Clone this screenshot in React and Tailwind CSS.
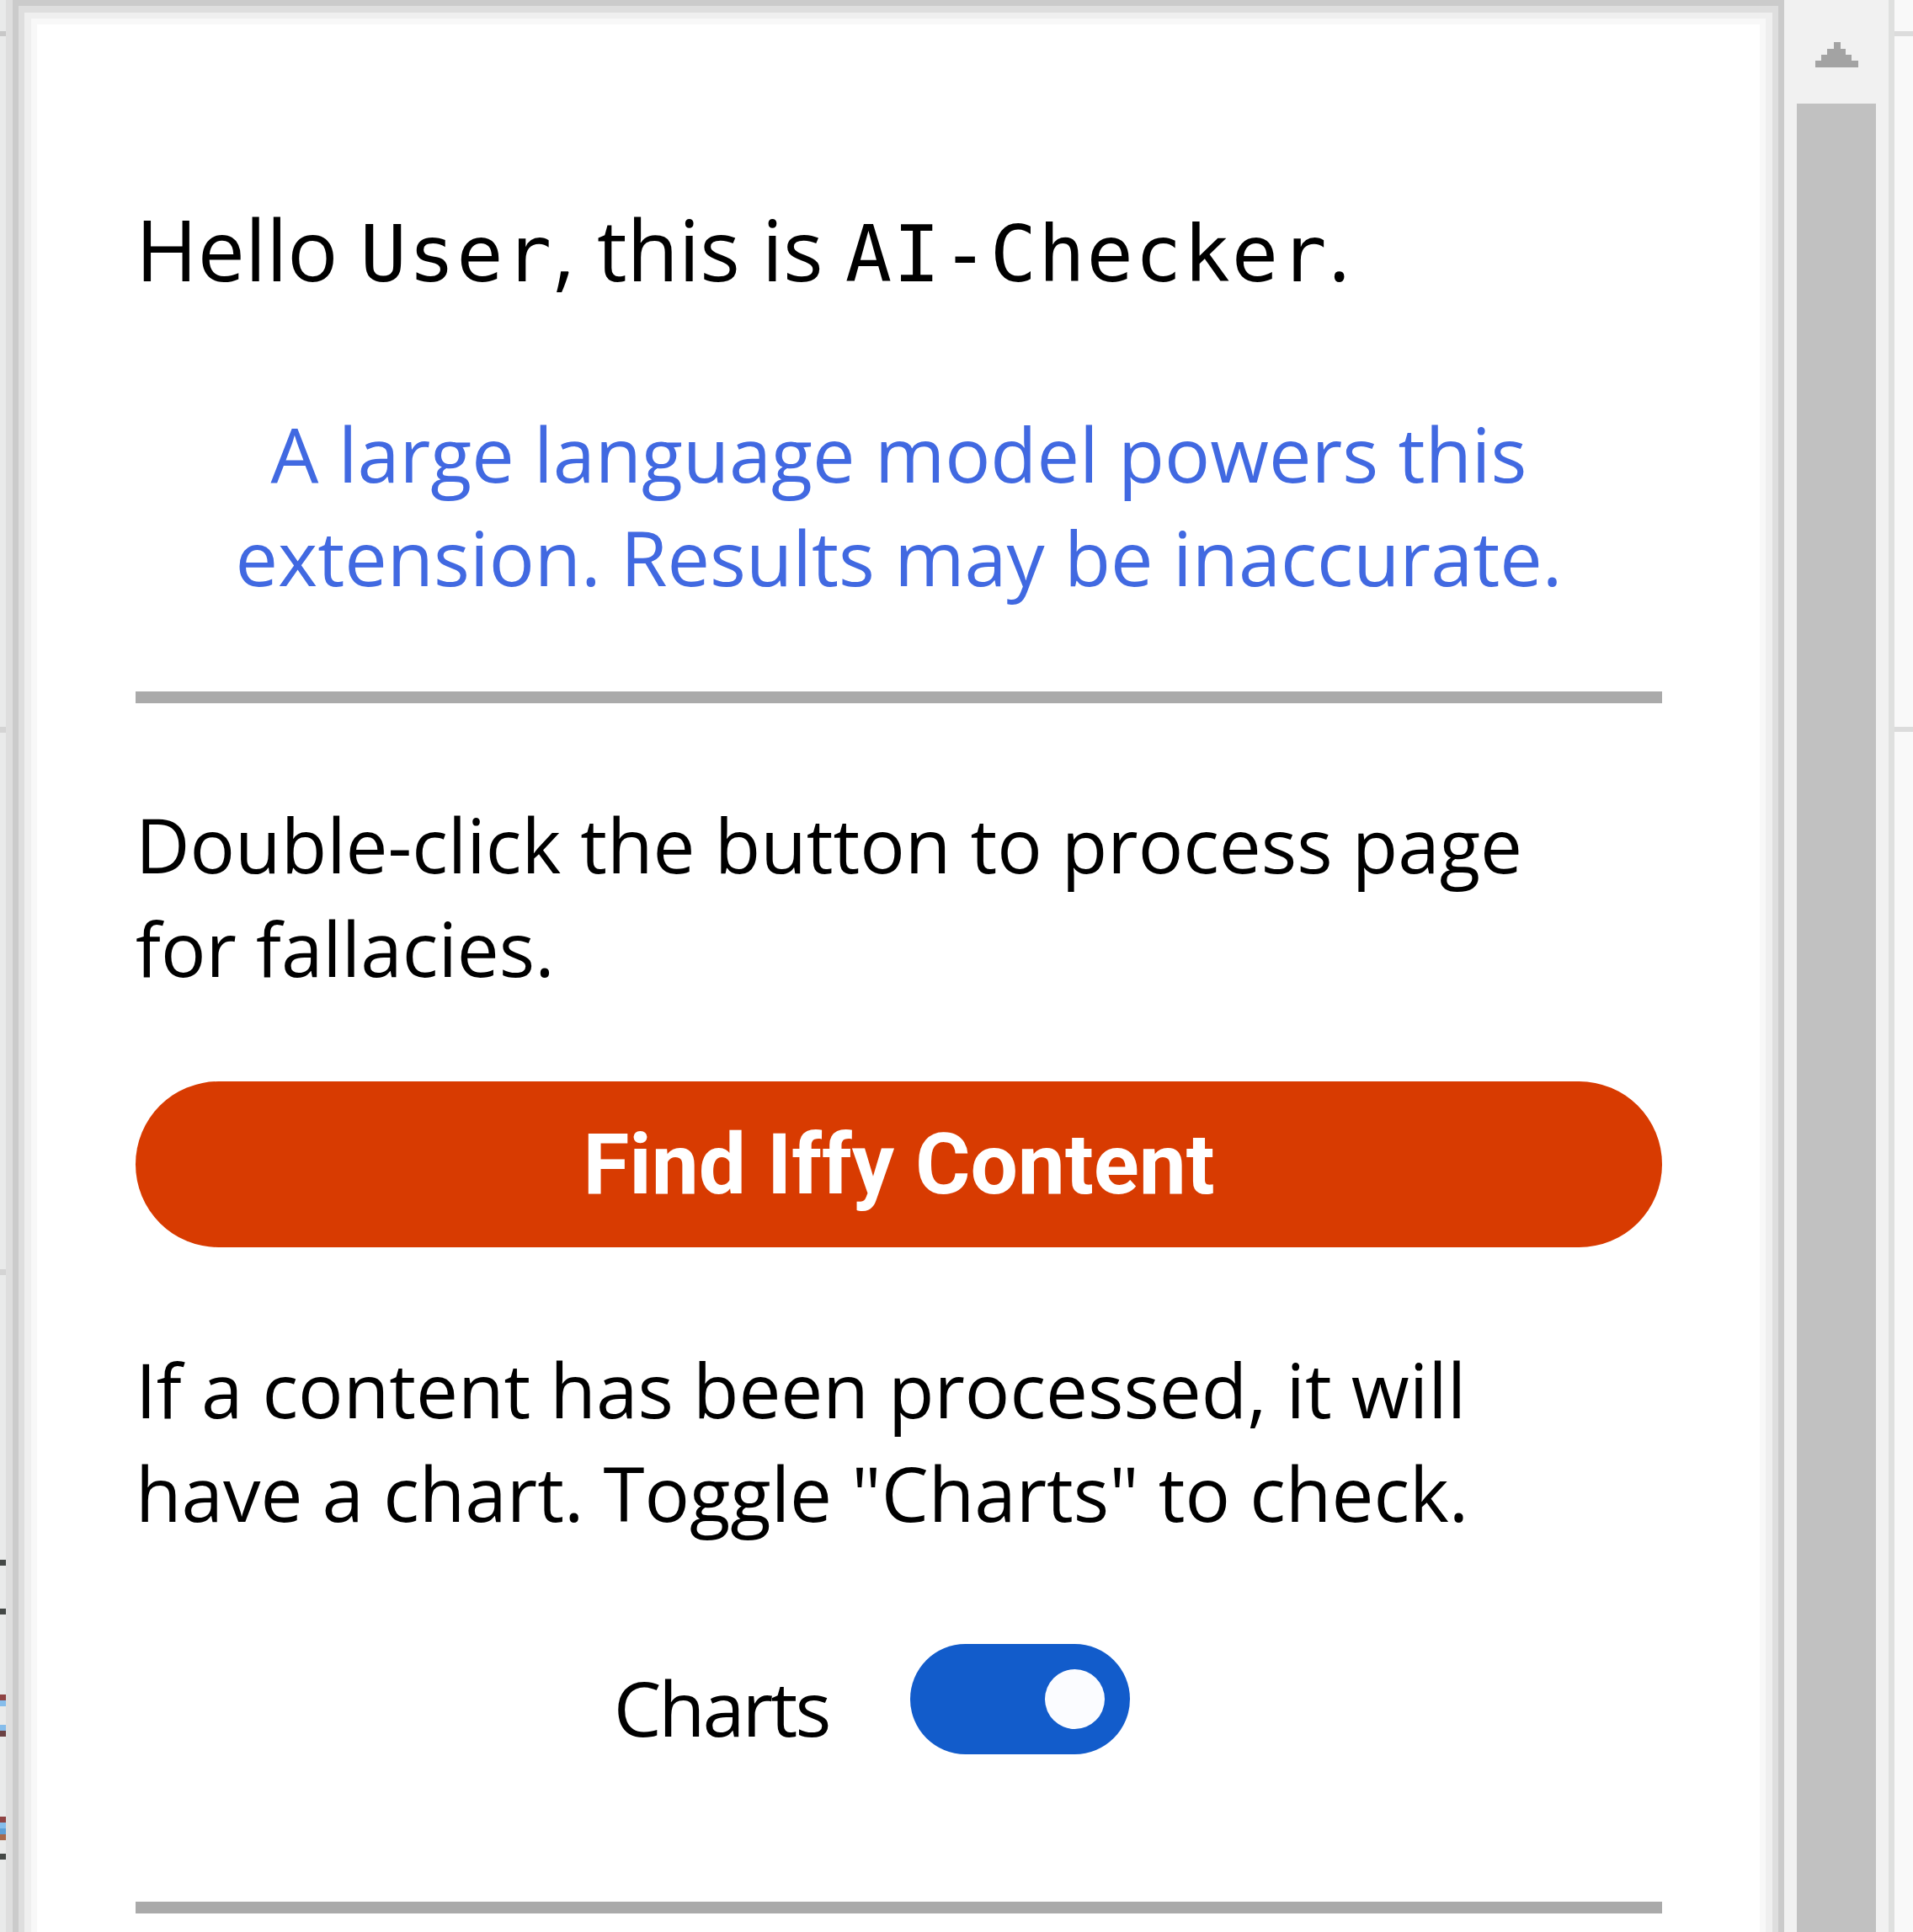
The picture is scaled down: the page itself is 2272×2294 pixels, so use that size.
// AI-Checker popup — Hello banner, disclaimer, scan button and charts switch
import { useState } from 'react';

function ScrollArrow() {
  return (
    <svg width="51" height="30" viewBox="0 0 51 30" className="block">
      <rect x="22" y="0" width="8" height="8" fill="#a3a3a3" />
      <rect x="14" y="8" width="22" height="7" fill="#a3a3a3" />
      <rect x="7" y="15" width="36" height="7" fill="#a3a3a3" />
      <rect x="0" y="22" width="51" height="8" fill="#a3a3a3" />
    </svg>
  );
}

function Toggle({ on, onChange }) {
  return (
    <button
      onClick={() => onChange(!on)}
      className={`w-[261px] h-[131px] rounded-full flex items-center px-[30px] ${on ? 'bg-[#125ccb] justify-end' : 'bg-[#c4c4c4] justify-start'}`}
    >
      <span className="w-[71px] h-[71px] rounded-full bg-[#fbfcff]" />
    </button>
  );
}

export default function App() {
  const [charts, setCharts] = useState(true);

  return (
    <div className="w-[2272px] h-[2294px] overflow-hidden flex bg-white font-['Open_Sans',sans-serif] text-black">
      {/* page peeking behind the popup */}
      <div className="w-[7px] flex-shrink-0 bg-[#e9eaea] flex flex-col">
        <div className="h-[37px]" />
        <div className="h-[6px] bg-[#c8c8c8]" />
        <div className="h-[820px]" />
        <div className="h-[7px] bg-[#d4d4d4]" />
        <div className="h-[637px]" />
        <div className="h-[7px] bg-[#d4d4d4]" />
        <div className="h-[338px]" />
        <div className="h-[7px] bg-[#444846]" />
        <div className="h-[51px]" />
        <div className="h-[7px] bg-[#444846]" />
        <div className="h-[95px]" />
        <div className="h-[7px] bg-[#8f4444]" />
        <div className="h-[7px] bg-[#86bdeb]" />
        <div className="h-[22px]" />
        <div className="h-[7px] bg-[#86bdeb]" />
        <div className="h-[7px] bg-[#6b4244]" />
        <div className="h-[95px]" />
        <div className="h-[7px] bg-[#8f4444]" />
        <div className="h-[7px] bg-[#86bdeb]" />
        <div className="h-[7px] bg-[#5e9fd6]" />
        <div className="h-[7px] bg-[#a8694a]" />
        <div className="h-[16px]" />
        <div className="h-[7px] bg-[#444846]" />
      </div>
      <div className="w-[8px] flex-shrink-0 bg-[#dedede]" />

      {/* popup frame */}
      <div className="w-[2104px] flex-shrink-0 border-l-[7px] border-r-[7px] border-t-[7px] border-[#cbcbcb]">
        <div className="h-full border-l-[7px] border-r-[7px] border-t-[8px] border-[#dedede]">
          <div className="h-full border-l-[8px] border-r-[8px] border-t-[7px] border-[#efefef]">
            <div className="h-full border-l-[7px] border-r-[7px] border-t-[7px] border-[#f8f8f8] bg-white">
              <div className="pl-[117px] pr-[116px] pt-[206px]">
                <h1 className="h-[120px] text-[100px] leading-[120px] font-normal whitespace-nowrap">
                  Hello <code className="font-['DejaVu_Sans_Mono',monospace] text-[92px] leading-[100px] tracking-[2px]">User</code>, this is{' '}
                  <code className="font-['DejaVu_Sans_Mono',monospace] text-[92px] leading-[100px] tracking-[2px]">AI-Checker</code>.
                </h1>

                <p className="mt-[122px] text-center text-[90px] leading-[123px] text-[#4169e1] whitespace-nowrap">
                  A large language model powers this
                  <br />
                  extension. Results may be inaccurate.
                </p>

                <hr className="mt-[98px] h-[14px] border-0 bg-[#aaaaaa]" />

                <p className="mt-[106px] text-[89px] leading-[123px] whitespace-nowrap">
                  Double-click the button to process page
                  <br />
                  for fallacies.
                </p>

                <button className="mt-[97px] w-full h-[197px] rounded-full bg-[#d83b01] text-white font-['Roboto',sans-serif] font-bold text-[100px] leading-[197px]">
                  Find Iffy Content
                </button>

                <p className="mt-[107px] text-[89px] leading-[123px] whitespace-nowrap">
                  If a content has been processed, it will
                  <br />
                  have a chart. Toggle "Charts" to check.
                </p>

                <div className="mt-[118px] flex items-start justify-center gap-[97px] pr-[64px]">
                  <span className="mt-[25px] text-[90px] leading-[100px] tracking-[-3px]">Charts</span>
                  <Toggle on={charts} onChange={setCharts} />
                </div>

                <hr className="mt-[175px] h-[14px] border-0 bg-[#aaaaaa]" />
              </div>
            </div>
          </div>
        </div>
      </div>

      {/* scrollbar */}
      <div className="w-[124px] flex-shrink-0 bg-[#f1f1f1] flex flex-col">
        <div className="h-[123px] flex justify-center pt-[50px]">
          <ScrollArrow />
        </div>
        <div className="flex-1 mx-[15px] bg-[#c1c1c1]" />
      </div>

      {/* right edge of the window behind */}
      <div className="w-[7px] flex-shrink-0 bg-[#dfe0df]" />
      <div className="flex-1 bg-[#f9f9f9] flex flex-col">
        <div className="h-[37px]" />
        <div className="h-[6px] bg-[#dcdcdc]" />
        <div className="h-[820px]" />
        <div className="h-[6px] bg-[#dcdcdc]" />
      </div>
    </div>
  );
}
